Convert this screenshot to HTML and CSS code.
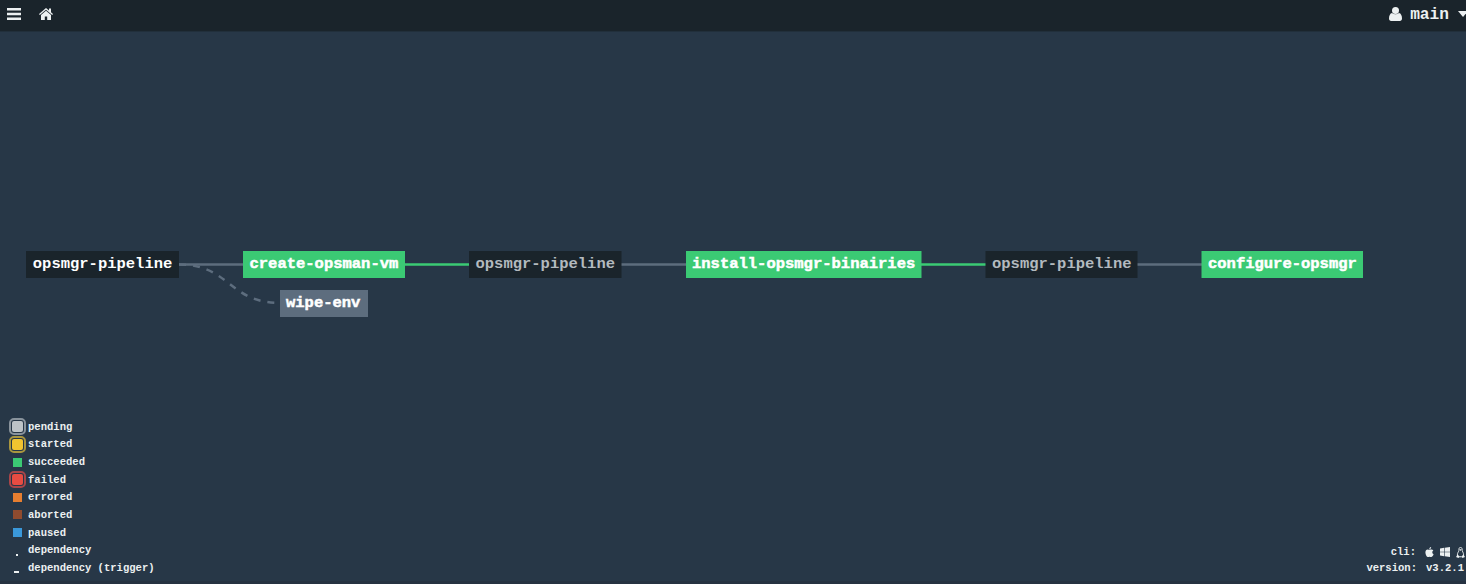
FILE: index.html
```html
<!DOCTYPE html>
<html lang="en">
<head>
<meta charset="utf-8">
<title>opsmgr pipeline</title>
<link rel="stylesheet" href="styles.css">
</head>
<body>
<div class="app">
  <header class="topbar">
    <nav class="nav">
      <svg class="menu-icon" viewBox="0 0 14 12"><path d="M0 0h14v2.600H0zM0 4.700h14v2.600H0zM0 9.400h14V12H0z"/></svg>
      <svg class="home-icon" viewBox="0 0 14 12"><path d="M7 0 0 6l.8 1L7 1.800 13.200 7l.8-1-2-1.700V.5h-2v2.100zM7 2.800 2 7v5h3.800V8.500h2.400V12H12V7z"/></svg>
    </nav>
    <div class="user">
      <svg class="user-icon" viewBox="0 0 13 14"><circle cx="6.500" cy="3.500" r="3.500"/><path d="M3 6C1 6.200 0 9 0 11.500 0 13 .8 14 2.200 14h8.600c1.400 0 2.200-1 2.200-2.500 0-2.500-1-5.300-3-5.500-2 1.700-5 1.700-7 0z"/></svg>
      <span class="team">main</span>
      <svg class="caret" viewBox="0 0 10 6"><path d="M0 0h10L5 6z"/></svg>
    </div>
  </header>
  <main class="stage">
    <svg class="pipeline" viewBox="0 31 1466 380">
      <g class="edges">
        <path class="edge" d="M179 264.500H243M621 264.500H686M1137 264.500H1202"/>
        <path class="edge passed" d="M405 264.500H469M921 264.500H986"/>
        <path class="edge dashed" d="M179 264.500C230 264.500 229 303 280 303"/>
      </g>
      <g class="node input active"><rect x="26" y="251" width="153" height="27"/><text x="32.800" y="268">opsmgr-pipeline</text></g>
      <g class="node job"><rect x="243" y="251" width="162" height="27"/><text x="249.500" y="268">create-opsman-vm</text></g>
      <g class="node pending"><rect x="280" y="290" width="88" height="27"/><text x="286" y="307">wipe-env</text></g>
      <g class="node input"><rect x="469" y="251" width="152.500" height="27"/><text x="475.500" y="268">opsmgr-pipeline</text></g>
      <g class="node job"><rect x="686" y="251" width="235.500" height="27"/><text x="692" y="268">install-opsmgr-binairies</text></g>
      <g class="node input"><rect x="985.500" y="251" width="152" height="27"/><text x="992" y="268">opsmgr-pipeline</text></g>
      <g class="node job"><rect x="1201.500" y="251" width="161.500" height="27"/><text x="1208" y="268">configure-opsmgr</text></g>
    </svg>
  </main>
  <footer class="footer">
    <ul class="legend">
      <li><i class="swatch grey ring"></i>pending</li>
      <li><i class="swatch yellow ring"></i>started</li>
      <li><i class="swatch green"></i>succeeded</li>
      <li><i class="swatch red ring"></i>failed</li>
      <li><i class="swatch orange"></i>errored</li>
      <li><i class="swatch brown"></i>aborted</li>
      <li><i class="swatch blue"></i>paused</li>
      <li><i class="line dot"></i>dependency</li>
      <li><i class="line dash"></i>dependency (trigger)</li>
    </ul>
    <div class="info">
      <div class="info-row">
        <span>cli:</span>
        <span class="platforms">
          <svg class="apple" viewBox="0 0 9 11"><path d="M6.300 0C5 .2 4.200 1.200 4.300 2.500 5.600 2.400 6.400 1.300 6.300 0zM4.500 3.100C3.800 3.100 3.300 2.700 2.500 2.700 1 2.700 0 4.100 0 6c0 2.300 1.400 5 2.800 5 .7 0 1-.4 1.800-.4s1.100.4 1.800.4C7.500 11 8.600 9.300 9 8 7.200 7.200 7.100 4.700 8.700 3.800 7.600 2.300 5.700 2.700 4.500 3.100z"/></svg>
          <svg class="windows" viewBox="0 0 10 10"><path d="M0 1.400 4.200.8v3.900H0zM4.800.7 10 0v4.700H4.800zM0 5.300h4.200v3.900L0 8.600zM4.800 5.300H10V10l-5.200-.7z"/></svg>
          <svg class="linux" viewBox="0 0 9 11"><path class="body" d="M3 3.200C2.700 1.200 3.200.5 4.500.5s1.900.8 1.600 2.700c0 1 1.500 2.400 1.500 4.600M3 3.200C3 4.500 1.400 5.500 1.400 7.800"/><path d="m1.400 7 2.100 2.700-1 1.300L0 10l.7-.9zM7.600 7 5.500 9.700l1 1.300L9 10l-.7-.9zM3.200 9.300h2.600v.9H3.200zM3.300 2.300h2.400L4.500 4z"/></svg>
        </span>
      </div>
      <div class="info-row"><span>version:</span><b class="version">v3.2.1</b></div>
    </div>
  </footer>
</div>
</body>
</html>
```
FILE: styles.css
```css
* { box-sizing: border-box; }
body {
  margin: 0;
  background: #273747;
  color: #ecf0f1;
  font-family: "Liberation Mono", "Courier New", monospace;
  font-weight: 700;
}
.app { display: flex; flex-direction: column; height: 584px; overflow: hidden; border-bottom: 3px solid #263241; }
.topbar {
  display: flex;
  justify-content: space-between;
  flex: 0 0 31px;
  background: #1a242b;
  box-shadow: 0 1px 0 #212f3b;
}
svg { display: block; fill: #ecf0f1; flex: none; }
.nav { display: flex; gap: 18px; padding: 8px 0 0 7px; }
.menu-icon { width: 14px; height: 12px; }
.home-icon { width: 14px; height: 12px; }
.user { display: flex; align-items: flex-start; margin-right: -2px; }
.user-icon { width: 13px; height: 14px; margin: 7px 8px 0 0; }
.team { font-size: 16.2px; line-height: 18px; margin: 6px 9px 0 0; }
.caret { width: 10px; height: 6px; margin-top: 11px; }
.stage { flex: 0 0 380px; }
.pipeline { width: 1466px; height: 380px; }
.edge { fill: none; stroke: #5d6d7e; stroke-width: 2.5; }
.passed { stroke: #3bca74; }
.dashed { stroke-dasharray: 7 7; }
.node text { font-size: 15.5px; fill: #fff; }
.input rect { fill: #1a242b; }
.input text { fill: #b3babf; }
.active text { fill: #fff; }
.job rect { fill: #3bca74; }
.pending rect { fill: #5d6d7e; }
.job text, .pending text { stroke: #fff; stroke-width: .5px; }
.footer { display: flex; justify-content: space-between; font-size: 10.55px; }
.legend { list-style: none; margin: 0; padding: 7px 0 0 13px; }
.legend li { display: flex; align-items: center; height: 17.640px; gap: 6px; }
.swatch { width: 9px; height: 9px; }
.ring { width: 11px; height: 11px; margin: 0 -1px; border-radius: 2px; outline: 2px solid; outline-offset: 1.5px; }
.grey { background: #bdc3c7; outline-color: #89939c; }
.yellow { background: #f1c430; outline-color: #a9963f; }
.green { background: #3bca74; }
.red { background: #e74c42; outline-color: #a94549; }
.orange { background: #e67e30; }
.brown { background: #8f4b2f; }
.blue { background: #3a98da; }
.line { height: 2px; background: #ecf0f1; margin-top: 9px; }
.dot { width: 2px; margin-left: 3px; margin-right: 4px; }
.dash { width: 5px; margin-left: 1px; margin-right: 3px; }
.info { padding: 133px 2px 0 0; }
.info-row { display: flex; justify-content: flex-end; align-items: center; height: 16px; gap: 9px; }
.platforms { display: flex; align-items: center; gap: 6px; margin-right: -1px; }
.apple { width: 9px; height: 10px; }
.windows { width: 10px; height: 10px; }
.linux { width: 9px; height: 11px; }
.body { fill: none; stroke: #ecf0f1; stroke-width: .9; }
```
